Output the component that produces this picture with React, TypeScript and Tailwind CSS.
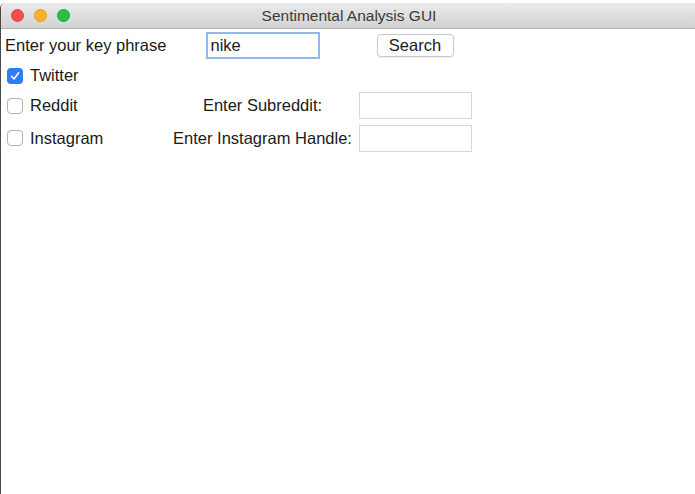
export default function App() {
  const font = { fontFamily: '"Liberation Sans", Arial, sans-serif' };
  return (
    <div className="h-[494px] w-[695px] bg-white pt-[3px] text-[#1a1a1a]" style={font}>
      <div className="flex h-[491px] flex-col border-l border-[#4a4a4a] rounded-tl-[5px] overflow-hidden">
        {/* Title bar */}
        <div className="relative flex h-[26px] shrink-0 items-center justify-center border-b border-[#b4b4b4] bg-gradient-to-b from-[#ebebeb] to-[#d2d2d2]">
          <div className="absolute left-[10px] top-[6px] flex gap-[10px]">
            <span className="h-[13px] w-[13px] rounded-full bg-[#fc4d4a] border border-[#e0443e]" />
            <span className="h-[13px] w-[13px] rounded-full bg-[#fdb12a] border border-[#dea123]" />
            <span className="h-[13px] w-[13px] rounded-full bg-[#2bc03c] border border-[#1aab29]" />
          </div>
          <span className="pl-[2px] text-[15.5px] text-[#3a3a3a]">Sentimental Analysis GUI</span>
        </div>

        {/* Form */}
        <div className="grid grid-cols-[168px_187px_118px] grid-rows-[33px_27px_33px_32px] items-center text-[16.5px]">
          <span className="pl-[4px]">Enter your key phrase</span>
          <div className="flex justify-center">
            <div className="flex h-[27px] w-[114px] items-center border-[2px] border-[#93b8ea] bg-white px-[3px]">
              nike
            </div>
          </div>
          <div className="flex justify-center">
            <button className="flex h-[23px] w-[77px] items-center justify-center rounded-[4px] border border-[#c9c9c9] bg-white pb-[1px] text-[16.5px] leading-none shadow-[0_1px_1px_rgba(0,0,0,0.08)]">
              Search
            </button>
          </div>

          <label className="flex items-center gap-[7px] pl-[6px]">
            <span className="flex h-[16px] w-[16px] items-center justify-center rounded-[4px] bg-[#2e7cf6]">
              <svg width="10" height="10" viewBox="0 0 10 10" fill="none">
                <path d="M1.5 5.3 L4 8 L8.6 1.8" stroke="white" strokeWidth="1.6" strokeLinecap="round" strokeLinejoin="round" />
              </svg>
            </span>
            Twitter
          </label>
          <span />
          <span />

          <label className="flex items-center gap-[7px] pl-[6px]">
            <span className="h-[16px] w-[16px] rounded-[4px] border border-[#b3b3b3] bg-white" />
            Reddit
          </label>
          <span className="text-center">Enter Subreddit:</span>
          <div className="flex justify-center">
            <div className="h-[27px] w-[113px] border border-[#d6d6d6] bg-white" />
          </div>

          <label className="flex items-center gap-[7px] pl-[6px]">
            <span className="h-[16px] w-[16px] rounded-[4px] border border-[#b3b3b3] bg-white" />
            Instagram
          </label>
          <span className="text-center">Enter Instagram Handle:</span>
          <div className="flex justify-center">
            <div className="h-[27px] w-[113px] border border-[#d6d6d6] bg-white" />
          </div>
        </div>
      </div>
    </div>
  );
}
